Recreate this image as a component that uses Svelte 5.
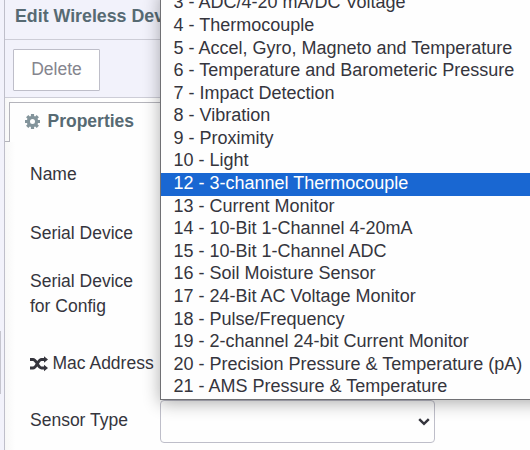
<script lang="ts">
  // ============================================================================
  // TYPES
  // ============================================================================

  interface SensorOption {
    id: number;
    name: string;
  }

  // ============================================================================
  // STATE
  // ============================================================================

  const options: SensorOption[] = [
    { id: 3, name: 'ADC/4-20 mA/DC Voltage' },
    { id: 4, name: 'Thermocouple' },
    { id: 5, name: 'Accel, Gyro, Magneto and Temperature' },
    { id: 6, name: 'Temperature and Barometeric Pressure' },
    { id: 7, name: 'Impact Detection' },
    { id: 8, name: 'Vibration' },
    { id: 9, name: 'Proximity' },
    { id: 10, name: 'Light' },
    { id: 12, name: '3-channel Thermocouple' },
    { id: 13, name: 'Current Monitor' },
    { id: 14, name: '10-Bit 1-Channel 4-20mA' },
    { id: 15, name: '10-Bit 1-Channel ADC' },
    { id: 16, name: 'Soil Moisture Sensor' },
    { id: 17, name: '24-Bit AC Voltage Monitor' },
    { id: 18, name: 'Pulse/Frequency' },
    { id: 19, name: '2-channel 24-bit Current Monitor' },
    { id: 20, name: 'Precision Pressure & Temperature (pA)' },
    { id: 21, name: 'AMS Pressure & Temperature' }
  ];

  const teeth = [0, 45, 90, 135];

  let active = $state(12);
</script>

<div class="window">
  <div class="gutter"><div class="thumb"></div></div>

  <div class="editor">
    <header>Edit Wireless Device</header>

    <div class="toolbar">
      <button class="delete">Delete</button>
    </div>

    <main>
      <div class="tabs">
        <div class="tab">
          <svg class="cog" viewBox="0 0 15 15" aria-hidden="true">
            <circle cx="7.500" cy="7.500" r="4.100" />
            {#each teeth as angle}
              <path d="M7.500 0v3.400M7.500 11.600V15" transform="rotate({angle} 7.500 7.500)" />
            {/each}
          </svg>
          <span>Properties</span>
        </div>
      </div>

      <div class="form">
        <div class="row name">Name</div>
        <div class="row serial">Serial Device</div>
        <div class="row config">Serial Device<br />for Config</div>
        <div class="row mac">
          <svg class="shuffle" viewBox="0 0 18 16" aria-hidden="true">
            <path class="line" d="M0 3.500h3C6.800 3.500 7.800 12 11.500 12H15M0 12h3C6.800 12 7.800 3.500 11.500 3.500H15" />
            <path d="M14 .3 18 3.500 14 6.700zM14 8.800 18 12 14 15.200z" />
          </svg>
          <span>Mac Address</span>
        </div>
        <div class="row sensor">
          <label for="sensor-type">Sensor Type</label>
          <button id="sensor-type" class="select" aria-label="Sensor Type">
            <svg class="chevron" viewBox="0 0 12 8" aria-hidden="true">
              <path d="M1.200 1.200 6 5.800l4.800-4.600" />
            </svg>
          </button>
        </div>
      </div>
    </main>
  </div>

  <!-- Open option list, lies over the form -->
  <div class="popup" role="listbox">
    {#each options as option (option.id)}
      <div
        class="option"
        class:active={option.id === active}
        role="option"
        tabindex="-1"
        aria-selected={option.id === active}
        onmouseenter={() => (active = option.id)}
      >{option.id} - {option.name}</div>
    {/each}
  </div>
</div>

<style>
  :global(body) {
    margin: 0;
    overflow: hidden;
  }

  .window {
    position: relative;
    display: flex;
    width: 530px;
    height: 450px;
    overflow: hidden;
    background: #f2f2fb;
    color: #35353d;
    font-family: "Liberation Sans", Arial, sans-serif;
    font-size: 17.5px;
  }

  .gutter {
    box-sizing: border-box;
    width: 5px;
    flex: none;
    padding-top: 331px;
    border-right: 1px solid #bfbfca;
  }

  .thumb {
    width: 1px;
    height: 63px;
    background: #c5c5ce;
  }

  .editor {
    flex: 1;
    display: flex;
    flex-direction: column;
    min-width: 0;
  }

  header {
    box-sizing: border-box;
    height: 40px;
    padding: 5px 10px;
    border-bottom: 1px solid #cdcdd7;
    color: #576a73;
    font-size: 17.8px;
    font-weight: 700;
    line-height: 22px;
    white-space: nowrap;
  }

  .toolbar {
    box-sizing: border-box;
    height: 58px;
    padding: 9px 8px;
    border-bottom: 1px solid #cdcdd7;
  }

  .delete {
    display: block;
    box-sizing: border-box;
    width: 87px;
    height: 42px;
    padding: 0 0 2px;
    border: 1px solid #bebec9;
    border-radius: 1px;
    background: #fff;
    color: #85858e;
    font: inherit;
  }

  main {
    flex: 1;
    background: linear-gradient(to right, #f7f7f7, #fefefe 10px);
  }

  .tabs {
    display: flex;
    height: 44px;
    padding-top: 4px;
    box-sizing: border-box;
  }

  .tabs::before {
    content: "";
    width: 4px;
    border-bottom: 1px solid #b4b4bb;
    box-sizing: border-box;
  }

  .tab {
    flex: 1;
    display: flex;
    align-items: center;
    gap: 7.5px;
    padding: 0 15px 2px;
    border-top: 1px solid #b4b4bb;
    border-left: 1px solid #b4b4bb;
    background: #fefefe;
    color: #576a73;
    font-weight: 700;
  }

  .cog {
    width: 15px;
    height: 15px;
    fill: none;
    stroke: #83949b;
    stroke-width: 3.2;
  }

  .form {
    padding-left: 25px;
    line-height: 25px;
  }

  .row {
    white-space: nowrap;
  }

  .name {
    padding-top: 20px;
  }

  .serial {
    padding-top: 34px;
  }

  .config {
    padding-top: 23px;
  }

  .mac {
    display: flex;
    align-items: center;
    gap: 4.5px;
    padding-top: 32px;
  }

  .shuffle {
    width: 18px;
    height: 16px;
    fill: #35353d;
  }

  .shuffle .line {
    fill: none;
    stroke: #35353d;
    stroke-width: 2.8;
  }

  .sensor {
    display: flex;
    align-items: center;
    padding-top: 24px;
  }

  .sensor label {
    box-sizing: border-box;
    width: 130px;
    padding-bottom: 2px;
  }

  .select {
    display: flex;
    align-items: center;
    justify-content: flex-end;
    box-sizing: border-box;
    width: 275px;
    height: 43px;
    padding: 0 4px;
    border: 1px solid #bebec9;
    border-radius: 4px;
    background: #fefefe;
  }

  .chevron {
    width: 12px;
    height: 8px;
    fill: none;
    stroke: #35353d;
    stroke-width: 2.5;
  }

  .popup {
    position: absolute;
    left: 160px;
    bottom: 50px;
    box-sizing: border-box;
    width: 420px;
    border: 1px solid #707074;
    background: #fefefe;
    box-shadow: 0 3px 16px rgba(0, 0, 0, 0.32);
    font-size: 18px;
  }

  .option {
    height: 22.6px;
    padding-left: 12.5px;
    line-height: 21px;
    white-space: nowrap;
  }

  .option.active {
    background: #1967d2;
    color: #fff;
  }
</style>
